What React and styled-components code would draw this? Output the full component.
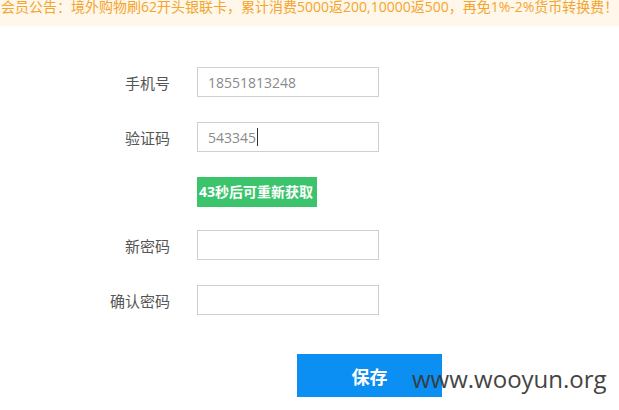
import React from 'react';
import styled, { createGlobalStyle } from 'styled-components';

const GlobalStyle = createGlobalStyle`
  html, body {
    margin: 0;
    padding: 0;
    background: #ffffff;
  }
  body {
    font-family: "Open Sans", "Noto Sans CJK SC", sans-serif;
    overflow: hidden;
  }
`;

const Page = styled.div`
  position: relative;
  width: 619px;
  height: 410px;
  overflow: hidden;
`;

const Notice = styled.div`
  height: 26px;
  background: #fff7ea;
  color: #f3a530;
  font-size: 14px;
  line-height: 14px;
  white-space: nowrap;
  padding-left: 1px;
`;

const Form = styled.div`
  padding-top: 41px;
  display: flex;
  flex-direction: column;
`;

const Row = styled.div`
  display: flex;
  align-items: center;
  margin-bottom: ${props => props.gap}px;
`;

const Label = styled.div`
  width: 197px;
  padding-right: 27px;
  box-sizing: border-box;
  text-align: right;
  font-size: 15px;
  color: #555555;
`;

const Field = styled.div`
  width: 182px;
  height: 30px;
  box-sizing: border-box;
  border: 1px solid #cfcfcf;
  padding-left: 10px;
  display: flex;
  align-items: center;
  font-size: 14px;
  color: #8a8a8a;
`;

const Caret = styled.span`
  display: inline-block;
  width: 1px;
  height: 18px;
  background: #333333;
  margin-left: 1px;
`;

const CodeButton = styled.div`
  margin-left: 197px;
  width: 120px;
  height: 30px;
  background: #3bc46c;
  color: #ffffff;
  font-size: 14px;
  font-weight: 700;
  line-height: 30px;
  padding-left: 2px;
  box-sizing: border-box;
  white-space: nowrap;
`;

const SaveButton = styled.div`
  margin-left: 297px;
  width: 145px;
  height: 43px;
  background: #0b8ff2;
  color: #ffffff;
  font-size: 18px;
  font-weight: 700;
  display: flex;
  align-items: center;
  justify-content: center;
`;

const Watermark = styled.div`
  position: absolute;
  left: 412px;
  top: 362px;
  font-family: "Open Sans", sans-serif;
  font-size: 24px;
  color: #3a3a3a;
  opacity: 0.95;
`;

const fields = [
  { label: '手机号', value: '18551813248' },
  { label: '验证码', value: '543345', caret: true },
];

const passwords = [
  { label: '新密码' },
  { label: '确认密码' },
];

export default function App() {
  return (
    <Page>
      <GlobalStyle />
      <Notice>会员公告：境外购物刷62开头银联卡，累计消费5000返200,10000返500，再免1%-2%货币转换费！</Notice>
      <Form>
        {fields.map((f, i) => (
          <Row key={`field-${i}`} gap={25}>
            <Label>{f.label}</Label>
            <Field>
              {f.value}
              {f.caret ? <Caret /> : null}
            </Field>
          </Row>
        ))}
        <Row gap={23}>
          <CodeButton>43秒后可重新获取</CodeButton>
        </Row>
        {passwords.map((f, i) => (
          <Row key={`pwd-${i}`} gap={i === 0 ? 25 : 39}>
            <Label>{f.label}</Label>
            <Field />
          </Row>
        ))}
        <SaveButton>保存</SaveButton>
      </Form>
      <Watermark>www.wooyun.org</Watermark>
    </Page>
  );
}
